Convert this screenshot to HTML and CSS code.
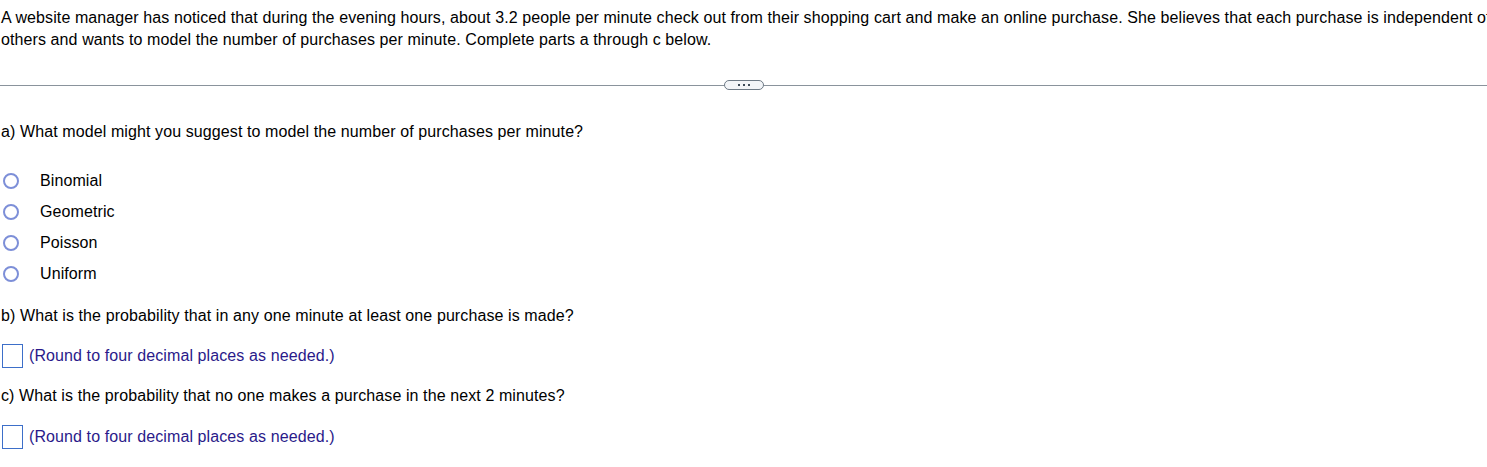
FILE: index.html
```html
<!DOCTYPE html>
<html>
<head>
<meta charset="utf-8">
<link rel="stylesheet" href="styles.css">
</head>
<body>
<div class="page">
  <p class="intro">A website manager has noticed that during the evening hours, about 3.2 people per minute check out from their shopping cart and make an online purchase. She believes that each purchase is independent of the others and wants to model the number of purchases per minute. Complete parts a through c below.</p>
  <div class="divider">
    <span class="line"></span>
    <span class="more"><span class="dot"></span><span class="dot"></span><span class="dot"></span></span>
    <span class="line"></span>
  </div>
  <p class="q qa">a) What model might you suggest to model the number of purchases per minute?</p>
  <ul class="options">
    <li><span class="radio"></span><span class="label">Binomial</span></li>
    <li><span class="radio"></span><span class="label">Geometric</span></li>
    <li><span class="radio"></span><span class="label">Poisson</span></li>
    <li><span class="radio"></span><span class="label">Uniform</span></li>
  </ul>
  <p class="q qb">b) What is the probability that in any one minute at least one purchase is made?</p>
  <div class="answer"><span class="box"></span><span class="hint">(Round to four decimal places as needed.)</span></div>
  <p class="q qc">c) What is the probability that no one makes a purchase in the next 2 minutes?</p>
  <div class="answer answer-c"><span class="box"></span><span class="hint">(Round to four decimal places as needed.)</span></div>
</div>
</body>
</html>
```
FILE: styles.css
```css
html, body {
  margin: 0;
  padding: 0;
  background: #ffffff;
  overflow: hidden;
}
body {
  font-family: "Liberation Sans", Arial, sans-serif;
  font-size: 16px;
  letter-spacing: 0.1px;
  color: #000000;
}
.page {
  width: 1487px;
  height: 467px;
  overflow: hidden;
}
.intro {
  margin: 0;
  padding: 7px 0 0 1px;
  line-height: 22px;
  width: 1560px;
}
.divider {
  display: flex;
  align-items: center;
  margin-top: 28px;
  height: 12px;
}
.line {
  flex: 1;
  height: 1px;
  background: #8a939c;
}
.more {
  display: flex;
  align-items: center;
  justify-content: center;
  gap: 3px;
  width: 38px;
  height: 8px;
  border: 1px solid #6e7a86;
  border-radius: 5px;
  background: #f3f5f8;
}
.dot {
  width: 2px;
  height: 2px;
  background: #3d4a58;
}
.q {
  margin: 0;
  padding-left: 1px;
  line-height: 20px;
}
.qa { margin-top: 31px; }
.options {
  list-style: none;
  margin: 29px 0 0 0;
  padding: 0;
  display: flex;
  flex-direction: column;
  gap: 11px;
}
.options li {
  display: flex;
  align-items: center;
  height: 20px;
}
.radio {
  width: 12px;
  height: 12px;
  border: 2px solid #7d8fd8;
  border-radius: 50%;
  margin-left: 3px;
  flex: none;
}
.label {
  margin-left: 21px;
}
.qb { margin-top: 22px; }
.answer {
  display: flex;
  align-items: center;
  margin-top: 18px;
  height: 24px;
}
.answer-c { margin-top: 19px; }
.box {
  width: 19px;
  height: 22px;
  border: 1px solid #3d6fc9;
  margin-left: 2px;
  flex: none;
}
.hint {
  margin-left: 6px;
  color: #2a1a8a;
}
.qc { margin-top: 18px; }
```
